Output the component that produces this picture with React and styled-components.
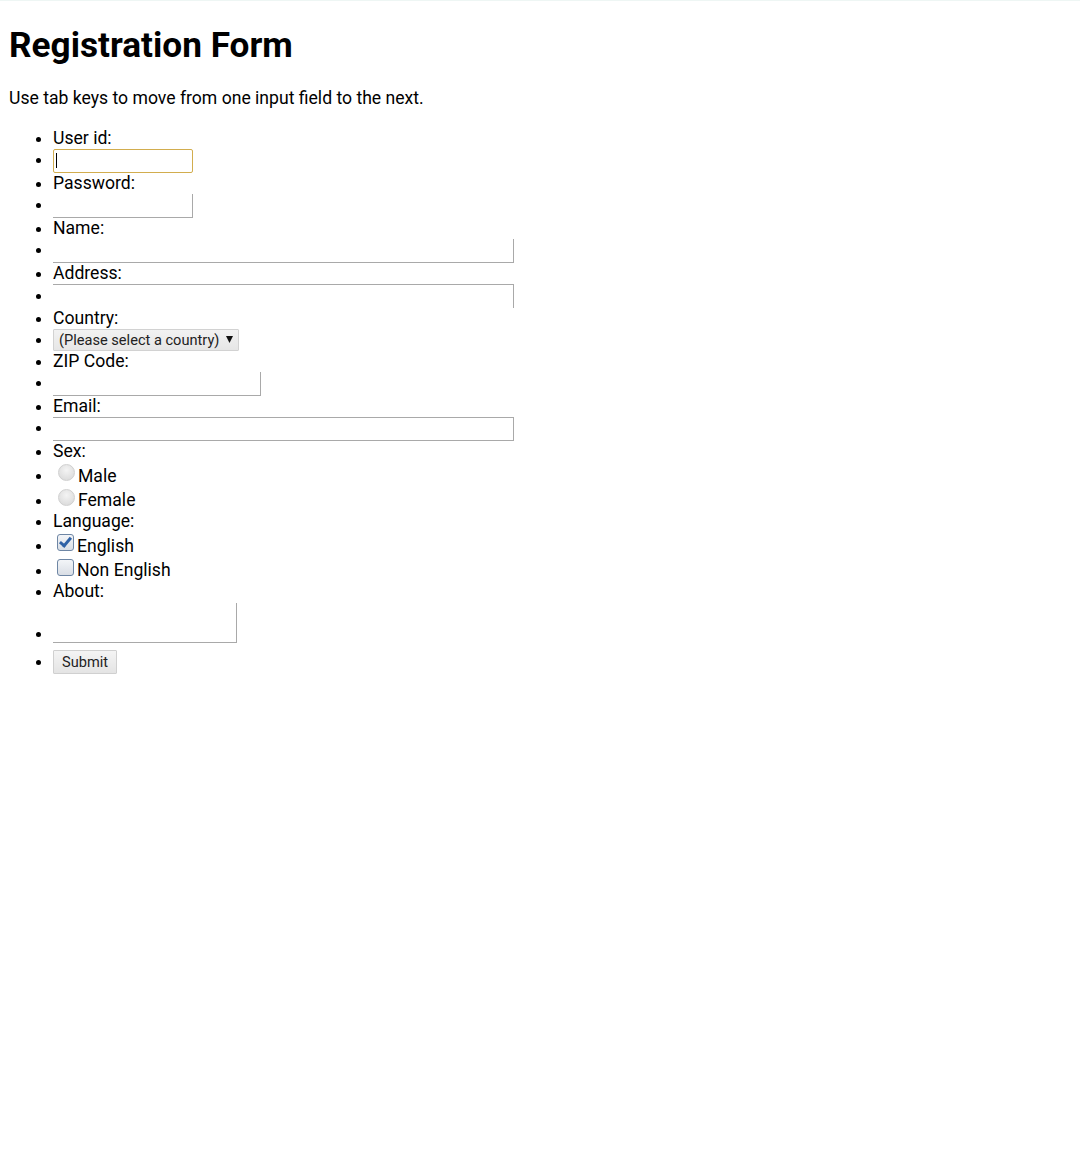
import React from 'react';
import styled, { createGlobalStyle, css } from 'styled-components';

const GlobalStyle = createGlobalStyle`
  html {
    background: #fff;
  }
  body {
    margin: 8px;
    font-family: Roboto, "Noto Sans", "Liberation Sans", sans-serif;
    color: #000;
  }
`;

const TopEdge = styled.div`
  position: fixed;
  top: 0;
  left: 0;
  right: 0;
  height: 1px;
  background: #eef6f4;
`;

const Title = styled.h1`
  margin: 16px 0 0 1px;
  font-size: 35.2px;
  font-weight: 700;
  line-height: 42px;
`;

const Intro = styled.p`
  margin: 22px 0 18.5px 1px;
  font-size: 17.6px;
  line-height: 21px;
`;

const FieldList = styled.ul`
  margin: 0;
  padding-left: 45px;
  font-size: 17.6px;
  line-height: 21px;
`;

const Item = styled.li``;

const edgeStyles = {
  rb: css`
    border-right: 1px solid #a9a9a9;
    border-bottom: 1px solid #a9a9a9;
  `,
  tr: css`
    border-top: 1px solid #a9a9a9;
    border-right: 1px solid #a9a9a9;
  `,
  trb: css`
    border-top: 1px solid #a9a9a9;
    border-right: 1px solid #a9a9a9;
    border-bottom: 1px solid #a9a9a9;
  `,
  focus: css`
    border: 1.5px solid #d2ad4e;
    border-radius: 2px;
  `,
};

const TextInput = styled.input`
  box-sizing: border-box;
  width: ${(p) => p.$w}px;
  height: 24px;
  margin: 0;
  padding: 1px 2px;
  font: 13px Roboto, sans-serif;
  background: #fff;
  border: 0;
  outline: none;
  ${(p) => edgeStyles[p.$edges || 'rb']}
`;

const CaretWrap = styled.span`
  position: relative;
  display: inline-block;
`;

const Caret = styled.span`
  position: absolute;
  left: 3px;
  top: 4px;
  width: 1px;
  height: 15px;
  background: #000;
`;

const SelectWrap = styled.span`
  position: relative;
  display: inline-block;
`;

const Select = styled.select`
  box-sizing: border-box;
  width: 186px;
  height: 22px;
  margin: 0;
  padding: 0 16px 0 5px;
  appearance: none;
  font: 14.6px Roboto, sans-serif;
  color: #222;
  border: 1px solid #d2d2d2;
  border-radius: 1px;
  background: linear-gradient(#f2f2f2, #e6e6e6);
`;

const Arrow = styled.svg`
  position: absolute;
  right: 6px;
  top: 50%;
  margin-top: -4px;
  width: 7px;
  height: 7px;
  pointer-events: none;
`;

const Radio = styled.input.attrs({ type: 'radio' })`
  appearance: none;
  box-sizing: border-box;
  width: 17px;
  height: 17px;
  margin: 2.5px 3px 0 5px;
  border-radius: 50%;
  border: 1px solid #d0d0d0;
  background: radial-gradient(circle at 50% 35%, #f4f4f4, #dcdcdc 80%);
  vertical-align: baseline;
`;

const Check = styled.input.attrs({ type: 'checkbox' })`
  appearance: none;
  box-sizing: border-box;
  width: 17px;
  height: 17px;
  margin: 2.5px 3px 0 4px;
  border-radius: 3px;
  border: 1.5px solid #6e86a4;
  background: linear-gradient(#f3f5f8, #d9dee5);
  vertical-align: baseline;
  position: relative;
  ${(p) =>
    p.checked &&
    css`
      &::after {
        content: '';
        position: absolute;
        left: 4px;
        top: 0px;
        width: 4px;
        height: 9px;
        border: solid #2f62a6;
        border-width: 0 3px 3px 0;
        transform: rotate(40deg);
      }
    `}
`;

const Area = styled.textarea`
  box-sizing: border-box;
  width: 184px;
  height: 40px;
  margin: 1px 0 0;
  padding: 2px;
  resize: none;
  font: 13px Roboto, sans-serif;
  border: 0;
  border-right: 1px solid #a9a9a9;
  border-bottom: 1px solid #a9a9a9;
  vertical-align: text-bottom;
`;

const SubmitButton = styled.button`
  box-sizing: border-box;
  height: 24px;
  margin: 6px 0 2px;
  padding: 0 8px;
  font: 14.6px Roboto, sans-serif;
  color: #222;
  border: 1px solid #d0d0d0;
  border-radius: 1px;
  background: linear-gradient(#f4f4f4, #e4e4e4);
`;

const fields = [
  { label: 'User id:', w: 140, edges: 'focus', caret: true },
  { label: 'Password:', w: 140, type: 'password' },
  { label: 'Name:', w: 461 },
  { label: 'Address:', w: 461, edges: 'tr' },
];

export default function App() {
  return (
    <>
      <GlobalStyle />
      <TopEdge />
      <Title>Registration Form</Title>
      <Intro>Use tab keys to move from one input field to the next.</Intro>
      <form onSubmit={(e) => e.preventDefault()}>
        <FieldList>
          {fields.map((f) => (
            <React.Fragment key={f.label}>
              <Item>{f.label}</Item>
              <Item>
                {f.caret ? (
                  <CaretWrap>
                    <TextInput $w={f.w} $edges={f.edges} />
                    <Caret />
                  </CaretWrap>
                ) : (
                  <TextInput $w={f.w} $edges={f.edges} type={f.type || 'text'} />
                )}
              </Item>
            </React.Fragment>
          ))}
          <Item>Country:</Item>
          <Item>
            <SelectWrap>
              <Select defaultValue="">
                <option value="">(Please select a country)</option>
              </Select>
              <Arrow viewBox="0 0 7 7">
                <path d="M0 0 H7 L3.5 7 Z" fill="#111" />
              </Arrow>
            </SelectWrap>
          </Item>
          <Item>ZIP Code:</Item>
          <Item>
            <TextInput $w={208} />
          </Item>
          <Item>Email:</Item>
          <Item>
            <TextInput $w={461} $edges="trb" type="email" />
          </Item>
          <Item>Sex:</Item>
          <Item>
            <Radio name="sex" value="m" />
            Male
          </Item>
          <Item>
            <Radio name="sex" value="f" />
            Female
          </Item>
          <Item>Language:</Item>
          <Item>
            <Check checked readOnly />
            English
          </Item>
          <Item>
            <Check />
            Non English
          </Item>
          <Item>About:</Item>
          <Item>
            <Area />
          </Item>
          <Item>
            <SubmitButton type="submit">Submit</SubmitButton>
          </Item>
        </FieldList>
      </form>
    </>
  );
}
